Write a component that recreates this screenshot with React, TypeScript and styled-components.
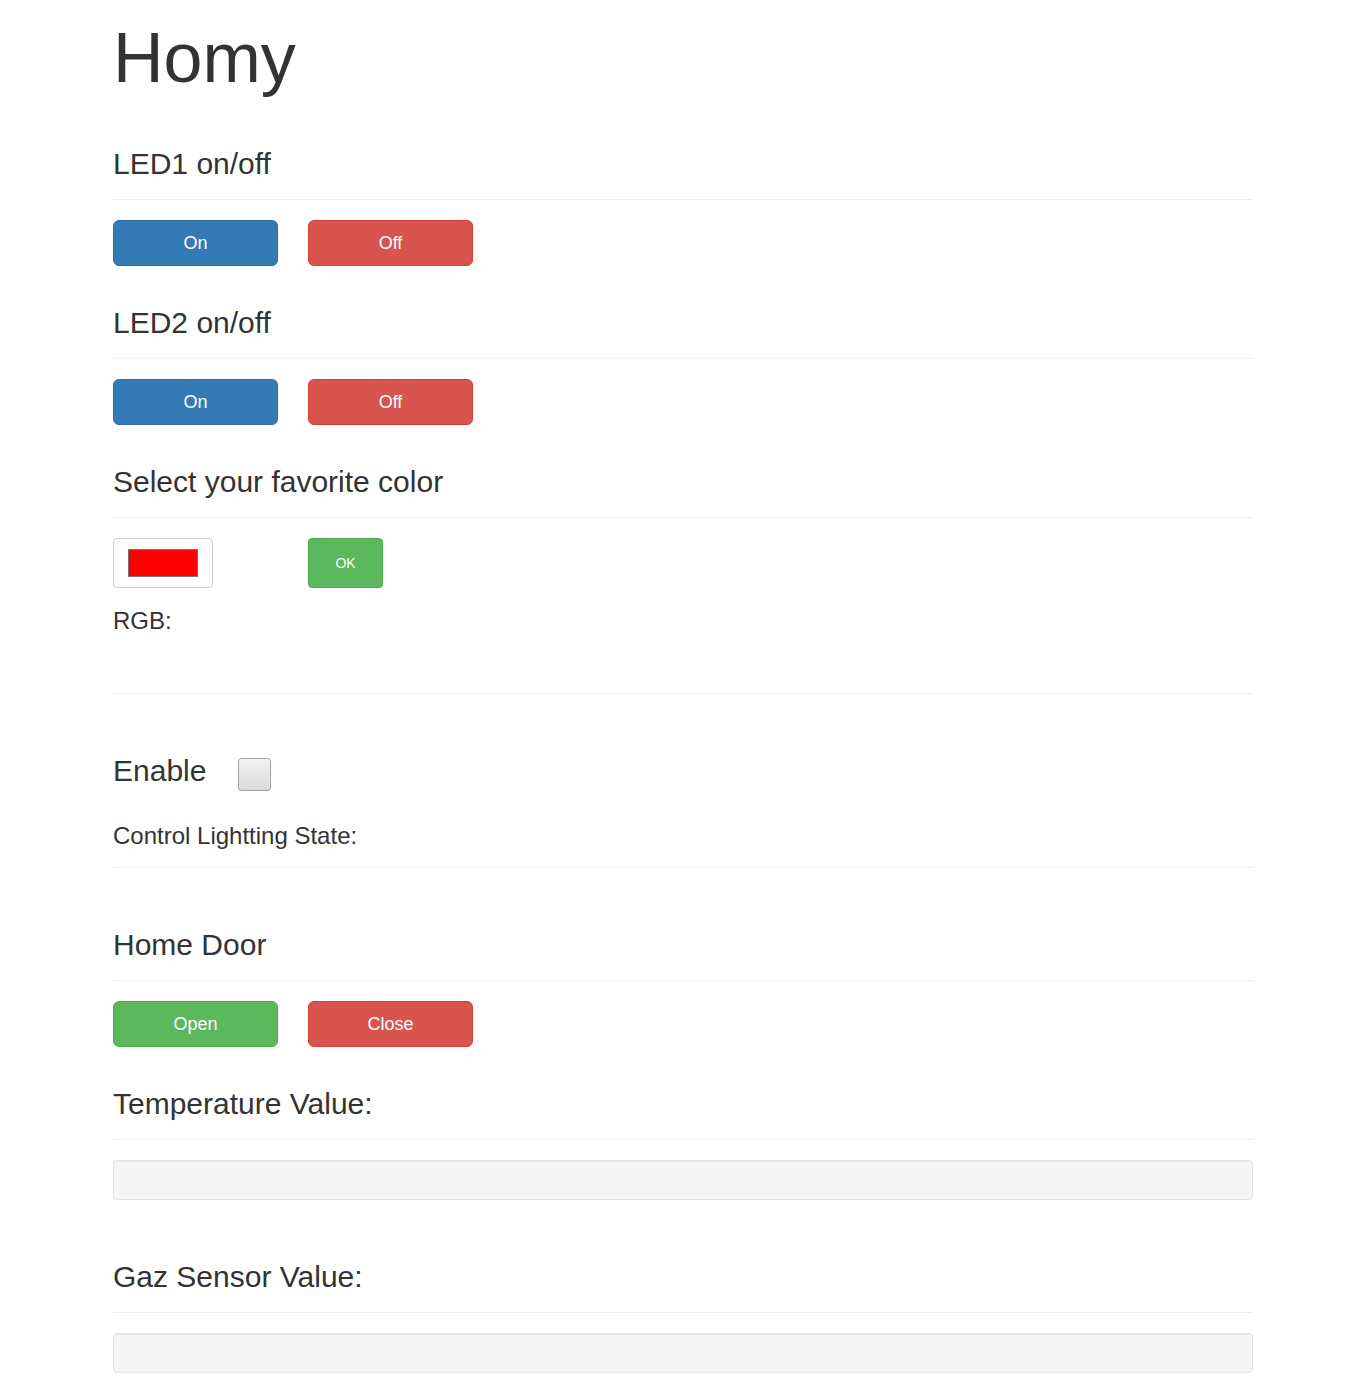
import React, { useState } from "react";
import styled, { createGlobalStyle } from "styled-components";

const GlobalStyle = createGlobalStyle`
  body {
    margin: 0;
    background: #fff;
    color: #333;
    font-family: "Liberation Sans", Arial, sans-serif;
  }
`;

const Container = styled.div`
  width: 1140px;
  margin: 0 auto;
  padding-bottom: 20px;
  display: flex;
  flex-direction: column;
`;

const Title = styled.h1`
  margin: 20px 0 0;
  font-size: 70px;
  font-weight: 400;
  line-height: 1.1;
`;

const PageHeader = styled.div<{ gap: number }>`
  margin-top: ${(props) => props.gap}px;
  padding-bottom: 9px;
  border-bottom: 1px solid #eee;
`;

const Heading = styled.h2`
  margin: 0 0 10px;
  font-size: 30px;
  font-weight: 400;
  line-height: 33px;
`;

const ButtonRow = styled.div`
  margin-top: 20px;
  display: grid;
  grid-template-columns: repeat(2, 165px);
  column-gap: 30px;
  align-items: start;
`;

const colors = {
  primary: { bg: "#337ab7", border: "#2e6da4" },
  danger: { bg: "#d9534f", border: "#d43f3a" },
  success: { bg: "#5cb85c", border: "#4cae4c" },
};

type Variant = keyof typeof colors;

const Button = styled.button<{ variant: Variant }>`
  box-sizing: border-box;
  width: 100%;
  height: 46px;
  padding: 11px 16px 9px;
  font-family: inherit;
  font-size: 18px;
  line-height: 1.3333;
  color: #fff;
  background: ${(props) => colors[props.variant].bg};
  border: 1px solid ${(props) => colors[props.variant].border};
  border-radius: 6px;
  cursor: pointer;
`;

const OkButton = styled(Button)`
  width: 75px;
  height: 50px;
  padding: 0;
  font-size: 14px;
  border-radius: 4px;
`;

const ColorBox = styled.div`
  box-sizing: border-box;
  width: 100px;
  height: 50px;
  border: 1px solid #ccc;
  border-radius: 4px;
  background: #fff;
  display: flex;
  align-items: center;
  justify-content: center;
`;

const Swatch = styled.div<{ color: string }>`
  box-sizing: border-box;
  width: 70px;
  height: 28px;
  border: 1px solid #767676;
  background: ${(props) => props.color};
`;

const SubHeading = styled.h3<{ gap: number }>`
  margin: ${(props) => props.gap}px 0 0;
  font-size: 24px;
  font-weight: 400;
  line-height: 26px;
`;

const Divider = styled.hr<{ gap: number }>`
  margin: ${(props) => props.gap}px 0 0;
  border: 0;
  border-top: 1px solid #eee;
`;

const EnableRow = styled.div`
  margin-top: 60px;
  display: flex;
  align-items: flex-start;
  gap: 32px;
`;

const EnableLabel = styled.h2`
  margin: 0;
  font-size: 30px;
  font-weight: 400;
  line-height: 33px;
`;

const Checkbox = styled.input`
  appearance: none;
  box-sizing: border-box;
  width: 33px;
  height: 33px;
  margin: 4px 0 0;
  border: 1px solid #a3a3a3;
  border-radius: 3px;
  background: linear-gradient(#f2f2f2, #dadada);
  cursor: pointer;

  :checked {
    background: linear-gradient(#e6e6e6, #c8c8c8);
  }
`;

const Well = styled.div`
  box-sizing: border-box;
  margin-top: 20px;
  min-height: 40px;
  padding: 19px;
  background: #f5f5f5;
  border: 1px solid #e3e3e3;
  border-radius: 4px;
  box-shadow: inset 0 1px 1px rgba(0, 0, 0, 0.05);
`;

const App = () => {
  const [enabled, setEnabled] = useState(false);
  return (
    <>
      <GlobalStyle />
      <Container>
        <Title>Homy</Title>

        <PageHeader gap={50}>
          <Heading>LED1 on/off</Heading>
        </PageHeader>
        <ButtonRow>
          <Button variant="primary">On</Button>
          <Button variant="danger">Off</Button>
        </ButtonRow>

        <PageHeader gap={40}>
          <Heading>LED2 on/off</Heading>
        </PageHeader>
        <ButtonRow>
          <Button variant="primary">On</Button>
          <Button variant="danger">Off</Button>
        </ButtonRow>

        <PageHeader gap={40}>
          <Heading>Select your favorite color</Heading>
        </PageHeader>
        <ButtonRow>
          <ColorBox>
            <Swatch color="#ff0000" />
          </ColorBox>
          <OkButton variant="success">OK</OkButton>
        </ButtonRow>
        <SubHeading gap={20}>RGB:</SubHeading>
        <Divider gap={59} />

        <EnableRow>
          <EnableLabel>Enable</EnableLabel>
          <Checkbox
            type="checkbox"
            checked={enabled}
            onChange={() => setEnabled(!enabled)}
          />
        </EnableRow>
        <SubHeading gap={32}>Control Lightting State:</SubHeading>
        <Divider gap={18} />

        <PageHeader gap={60}>
          <Heading>Home Door</Heading>
        </PageHeader>
        <ButtonRow>
          <Button variant="success">Open</Button>
          <Button variant="danger">Close</Button>
        </ButtonRow>

        <PageHeader gap={40}>
          <Heading>Temperature Value:</Heading>
        </PageHeader>
        <Well />

        <PageHeader gap={60}>
          <Heading>Gaz Sensor Value:</Heading>
        </PageHeader>
        <Well />
      </Container>
    </>
  );
};

export default App;
